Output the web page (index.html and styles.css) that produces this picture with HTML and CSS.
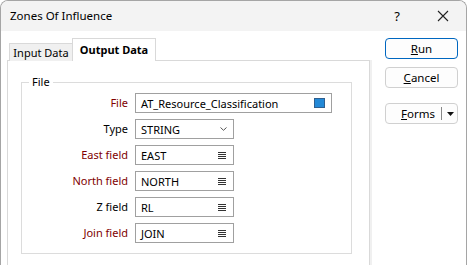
FILE: index.html
```html
<!DOCTYPE html>
<html>
<head>
<meta charset="utf-8">
<link rel="stylesheet" href="styles.css">
</head>
<body>
<div class="window">
  <div class="titlebar">
    <span class="title">Zones Of Influence</span>
    <div class="tb-buttons">
      <span class="help">?</span>
      <span class="close"><svg width="12" height="12" viewBox="0 0 12 12"><path d="M1 1L11 11M11 1L1 11" stroke="#222" stroke-width="1.1" fill="none"/></svg></span>
    </div>
  </div>
  <div class="body">
    <div class="main">
      <div class="tabs">
        <div class="tab">Input Data</div>
        <div class="tab active">Output Data</div>
      </div>
      <div class="panel">
        <fieldset class="group">
          <legend>File</legend>
          <div class="form">
            <label class="lbl req">File</label>
            <div class="input wide"><span class="val">AT_Resource_Classification</span><span class="swatch"></span></div>

            <label class="lbl">Type</label>
            <div class="input"><span class="val">STRING</span><svg class="chev" width="7" height="4" viewBox="0 0 7 4"><path d="M0.5 0.5L3.5 3.3L6.5 0.5" stroke="#555" stroke-width="1" fill="none"/></svg></div>

            <label class="lbl req">East field</label>
            <div class="input"><span class="val">EAST</span><svg class="menu" width="8" height="7" viewBox="0 0 8 7"><path d="M0 0.5H8M0 2.5H8M0 4.5H8M0 6.5H8" stroke="#333" stroke-width="1"/></svg></div>

            <label class="lbl req">North field</label>
            <div class="input"><span class="val">NORTH</span><svg class="menu" width="8" height="7" viewBox="0 0 8 7"><path d="M0 0.5H8M0 2.5H8M0 4.5H8M0 6.5H8" stroke="#333" stroke-width="1"/></svg></div>

            <label class="lbl">Z field</label>
            <div class="input"><span class="val">RL</span><svg class="menu" width="8" height="7" viewBox="0 0 8 7"><path d="M0 0.5H8M0 2.5H8M0 4.5H8M0 6.5H8" stroke="#333" stroke-width="1"/></svg></div>

            <label class="lbl req">Join field</label>
            <div class="input"><span class="val">JOIN</span><svg class="menu" width="8" height="7" viewBox="0 0 8 7"><path d="M0 0.5H8M0 2.5H8M0 4.5H8M0 6.5H8" stroke="#333" stroke-width="1"/></svg></div>
          </div>
        </fieldset>
      </div>
    </div>
    <div class="side">
      <button class="btn primary"><u>R</u>un</button>
      <button class="btn"><u>C</u>ancel</button>
      <div class="btn split"><span class="split-label"><u>F</u>orms</span><span class="divider"></span><svg class="arrow" width="7" height="4" viewBox="0 0 7 4"><path d="M0 0H7L3.5 4Z" fill="#111"/></svg></div>
    </div>
  </div>
</div>
</body>
</html>
```
FILE: styles.css
```css
html, body {
  margin: 0;
  padding: 0;
  background: #ffffff;
}
body {
  font-family: "Noto Sans", "Open Sans", sans-serif;
  font-size: 11px;
  color: #000;
  overflow: hidden;
}
.window {
  width: 467px;
  height: 265px;
  box-sizing: border-box;
  border: 1px solid #a5a5a5;
  border-bottom: none;
  border-radius: 8px 8px 0 0;
  display: flex;
  flex-direction: column;
  overflow: hidden;
  background: #fff;
}
.titlebar {
  height: 30px;
  flex: none;
  background: #f3f3f3;
  display: flex;
  align-items: center;
  padding-left: 9px;
}
.title {
  flex: 1;
  font-size: 11.5px;
  line-height: 16px;
  margin-top: -1px;
}
.tb-buttons {
  display: flex;
  align-items: center;
}
.help {
  width: 12px;
  text-align: center;
  font-size: 13px;
  margin-right: 34px;
  margin-top: -1px;
}
.close {
  display: flex;
  margin-right: 17px;
}
.body {
  flex: 1;
  display: flex;
  min-height: 0;
}
.main {
  padding: 7px 0 0 6px;
  display: flex;
  flex-direction: column;
}
.tabs {
  display: flex;
  align-items: flex-end;
  padding-left: 2px;
  margin-bottom: -1px;
  position: relative;
  z-index: 1;
}
.tab {
  height: 17px;
  line-height: 17px;
  width: 62px;
  text-align: center;
  background: #f0f0f0;
  border: 1px solid #d9d9d9;
  border-bottom: none;
  border-right: none;
  white-space: nowrap;
}
.tab.active {
  height: 22px;
  line-height: 21px;
  background: #fff;
  font-weight: bold;
  border-right: 1px solid #d9d9d9;
  width: 82px;
}
.panel {
  flex: 1;
  width: 363px;
  box-sizing: border-box;
  border: 1px solid #d9d9d9;
  border-bottom: none;
  box-shadow: 2px 0 0 #f0f0f0;
  padding: 13px 0 0 13px;
  background: #fff;
}
.group {
  margin: 0;
  width: 331px;
  box-sizing: border-box;
  border: 1px solid #dcdcdc;
  padding: 3px 0 10px 0;
}
.group legend {
  margin-left: 7px;
  padding: 0 3px;
  line-height: 16px;
}
.form {
  display: grid;
  grid-template-columns: 106px auto;
  column-gap: 7px;
  row-gap: 6px;
  align-items: center;
}
.lbl {
  text-align: right;
  line-height: 20px;
}
.lbl.req {
  color: #800000;
}
.input {
  height: 20px;
  width: 99px;
  box-sizing: border-box;
  border: 1px solid #a0a0a0;
  display: flex;
  align-items: center;
  padding: 0 6px 0 5px;
}
.input.wide {
  width: 197px;
}
.val {
  flex: 1;
  white-space: nowrap;
}
.swatch {
  width: 11px;
  height: 10px;
  box-sizing: border-box;
  background: #2389d7;
  border: 1px solid #2f5f8f;
}
.menu {
  margin-right: 1px;
}
.side {
  padding: 7px 0 0 15px;
  display: flex;
  flex-direction: column;
}
.btn {
  width: 73px;
  height: 21px;
  box-sizing: border-box;
  border: 1px solid #d0d0d0;
  border-radius: 4px;
  background: #fdfdfd;
  font-family: inherit;
  font-size: 11.5px;
  color: #000;
  padding: 0;
  display: flex;
  align-items: center;
  justify-content: center;
  margin-bottom: 8px;
}
.btn.primary {
  border-color: #0067c0;
}
.btn.split {
  margin-top: 7px;
  justify-content: flex-start;
}
.split-label {
  width: 49px;
  text-align: right;
}
.divider {
  width: 1px;
  height: 13px;
  background: #888;
  margin-left: 6px;
  margin-right: 5px;
}
.arrow {
  display: block;
}
```
